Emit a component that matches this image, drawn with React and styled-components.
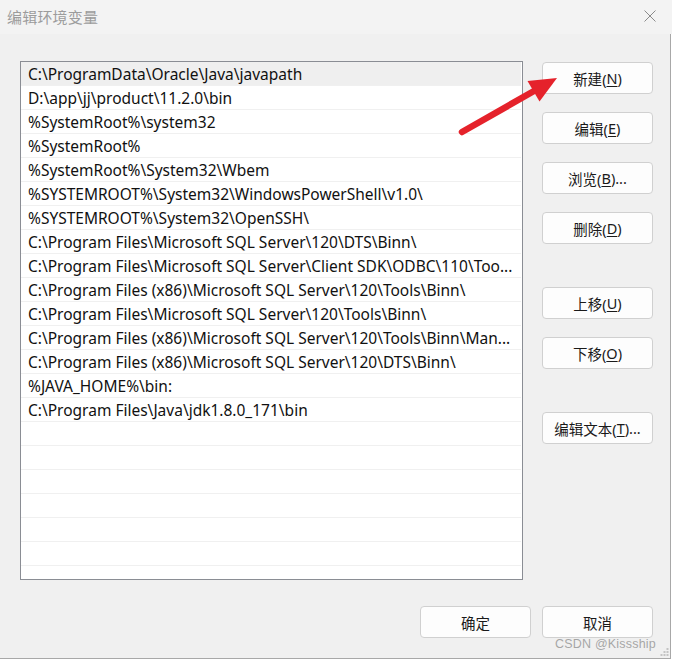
import React from 'react';
import styled, { createGlobalStyle } from 'styled-components';

const paths = [
    'C:\\ProgramData\\Oracle\\Java\\javapath',
    'D:\\app\\jj\\product\\11.2.0\\bin',
    '%SystemRoot%\\system32',
    '%SystemRoot%',
    '%SystemRoot%\\System32\\Wbem',
    '%SYSTEMROOT%\\System32\\WindowsPowerShell\\v1.0\\',
    '%SYSTEMROOT%\\System32\\OpenSSH\\',
    'C:\\Program Files\\Microsoft SQL Server\\120\\DTS\\Binn\\',
    'C:\\Program Files\\Microsoft SQL Server\\Client SDK\\ODBC\\110\\Too...',
    'C:\\Program Files (x86)\\Microsoft SQL Server\\120\\Tools\\Binn\\',
    'C:\\Program Files\\Microsoft SQL Server\\120\\Tools\\Binn\\',
    'C:\\Program Files (x86)\\Microsoft SQL Server\\120\\Tools\\Binn\\Man...',
    'C:\\Program Files (x86)\\Microsoft SQL Server\\120\\DTS\\Binn\\',
    '%JAVA_HOME%\\bin:',
    'C:\\Program Files\\Java\\jdk1.8.0_171\\bin',
];

const sideButtons = [
    { label: '新建', key: 'N' },
    { label: '编辑', key: 'E' },
    { label: '浏览', key: 'B', dots: true },
    { label: '删除', key: 'D' },
    { label: '上移', key: 'U', spaced: true },
    { label: '下移', key: 'O' },
    { label: '编辑文本', key: 'T', dots: true, spaced: true },
];

const GlobalStyle = createGlobalStyle`
    html, body {
        margin: 0;
        padding: 0;
        background: #ffffff;
    }
    body {
        font-family: "Noto Sans", "Noto Sans CJK SC", sans-serif;
    }
`

export default function App() {
    const rows = [...paths, ...Array(22 - paths.length).fill('')];

    return (
        <Window>
            <GlobalStyle />
            <TitleBar>
                <Title>编辑环境变量</Title>
                <CloseIcon width="12" height="12" viewBox="0 0 12 12">
                    <path d="M0.5 0.5 L11.5 11.5 M11.5 0.5 L0.5 11.5" stroke="#8a8a8a" strokeWidth="1" />
                </CloseIcon>
            </TitleBar>

            <Body>
                <MainRow>
                    <ListBox>
                        {rows.map((p, i) => (
                            <Row key={i} selected={i === 0}>{p}</Row>
                        ))}
                    </ListBox>

                    <ButtonColumn>
                        {sideButtons.map((b) => (
                            <DialogButton key={b.label} spaced={b.spaced}>
                                {b.label}(<u>{b.key}</u>){b.dots ? '...' : ''}
                            </DialogButton>
                        ))}
                    </ButtonColumn>
                </MainRow>

                <Footer>
                    <DialogButton>确定</DialogButton>
                    <DialogButton>取消</DialogButton>
                </Footer>
            </Body>

            <Arrow width="673" height="661" viewBox="0 0 673 661">
                <line x1="462" y1="132" x2="534" y2="91" stroke="#e5222b" strokeWidth="6.5" strokeLinecap="round" />
                <polygon points="557,78 527.5,81 539.5,101.5" fill="#e5222b" />
            </Arrow>

            <Watermark>CSDN @Kissship</Watermark>

            <Grip width="10" height="10" viewBox="0 0 10 10">
                <rect x="7.5" y="1" width="2" height="2" fill="#c4c4c4" />
                <rect x="4.5" y="4" width="2" height="2" fill="#c4c4c4" />
                <rect x="7.5" y="4" width="2" height="2" fill="#c4c4c4" />
                <rect x="1.5" y="7" width="2" height="2" fill="#c4c4c4" />
                <rect x="4.5" y="7" width="2" height="2" fill="#c4c4c4" />
                <rect x="7.5" y="7" width="2" height="2" fill="#c4c4c4" />
            </Grip>
        </Window>
    );
}

const Window = styled.div`
    position: relative;
    width: 673px;
    height: 661px;
    overflow: hidden;
    background: #ffffff;
`

const TitleBar = styled.div`
    display: flex;
    align-items: center;
    justify-content: space-between;
    height: 34px;
    padding: 0 16px 0 7px;
    box-sizing: border-box;
    background: #f3f3f3;
    width: 672px;
`

const Title = styled.div`
    font-family: "Noto Sans CJK SC", sans-serif;
    font-size: 15px;
    color: #9c9c9c;
    letter-spacing: 0.2px;
    margin-top: -2px;
`

const CloseIcon = styled.svg`
    display: block;
    margin-top: -2px;
`

const Body = styled.div`
    width: 671px;
    height: 625px;
    box-sizing: border-box;
    padding: 27px 17px 0 20px;
    background: #f0f0f0;
    border-right: 1px solid #a8a8a8;
    border-bottom: 1px solid #a8a8a8;
`

const MainRow = styled.div`
    display: flex;
    gap: 19px;
`

const ListBox = styled.div`
    width: 504px;
    height: 519px;
    box-sizing: border-box;
    border: 1px solid #8a8d94;
    background: #ffffff;
    overflow: hidden;
`

const Row = styled.div`
    height: 24px;
    box-sizing: border-box;
    padding: 1px 0 0 7px;
    margin-right: 1px;
    border-bottom: 1px solid #f0f0f0;
    background: ${(p) => (p.selected ? '#efefef' : '#ffffff')};
    font-family: "Noto Sans", "Noto Sans CJK SC", sans-serif;
    font-size: 15.5px;
    line-height: 22px;
    color: #111111;
    white-space: nowrap;
    overflow: hidden;
`

const ButtonColumn = styled.div`
    display: flex;
    flex-direction: column;
    gap: 18px;
    padding-top: 1px;
`

const DialogButton = styled.div`
    width: 111px;
    height: 32px;
    box-sizing: border-box;
    margin-top: ${(p) => (p.spaced ? '25px' : '0')};
    display: flex;
    align-items: center;
    justify-content: center;
    border: 1px solid #d0d0d0;
    border-radius: 4px;
    background: #fdfdfd;
    font-family: "Noto Sans", "Noto Sans CJK SC", sans-serif;
    font-size: 14.5px;
    color: #1a1a1a;
    white-space: nowrap;

    u {
        text-decoration-thickness: 1px;
        text-underline-offset: 2px;
    }
`

const Footer = styled.div`
    display: flex;
    justify-content: flex-end;
    gap: 11px;
    margin-top: 26px;
`

const Arrow = styled.svg`
    position: absolute;
    left: 0;
    top: 0;
    pointer-events: none;
`

const Watermark = styled.div`
    position: absolute;
    left: 555px;
    top: 637px;
    font-family: "Liberation Sans", Arial, sans-serif;
    font-size: 12.5px;
    color: rgba(140, 140, 140, 0.75);
    letter-spacing: 0.2px;
    pointer-events: none;
`

const Grip = styled.svg`
    position: absolute;
    left: 659px;
    top: 647px;
`
